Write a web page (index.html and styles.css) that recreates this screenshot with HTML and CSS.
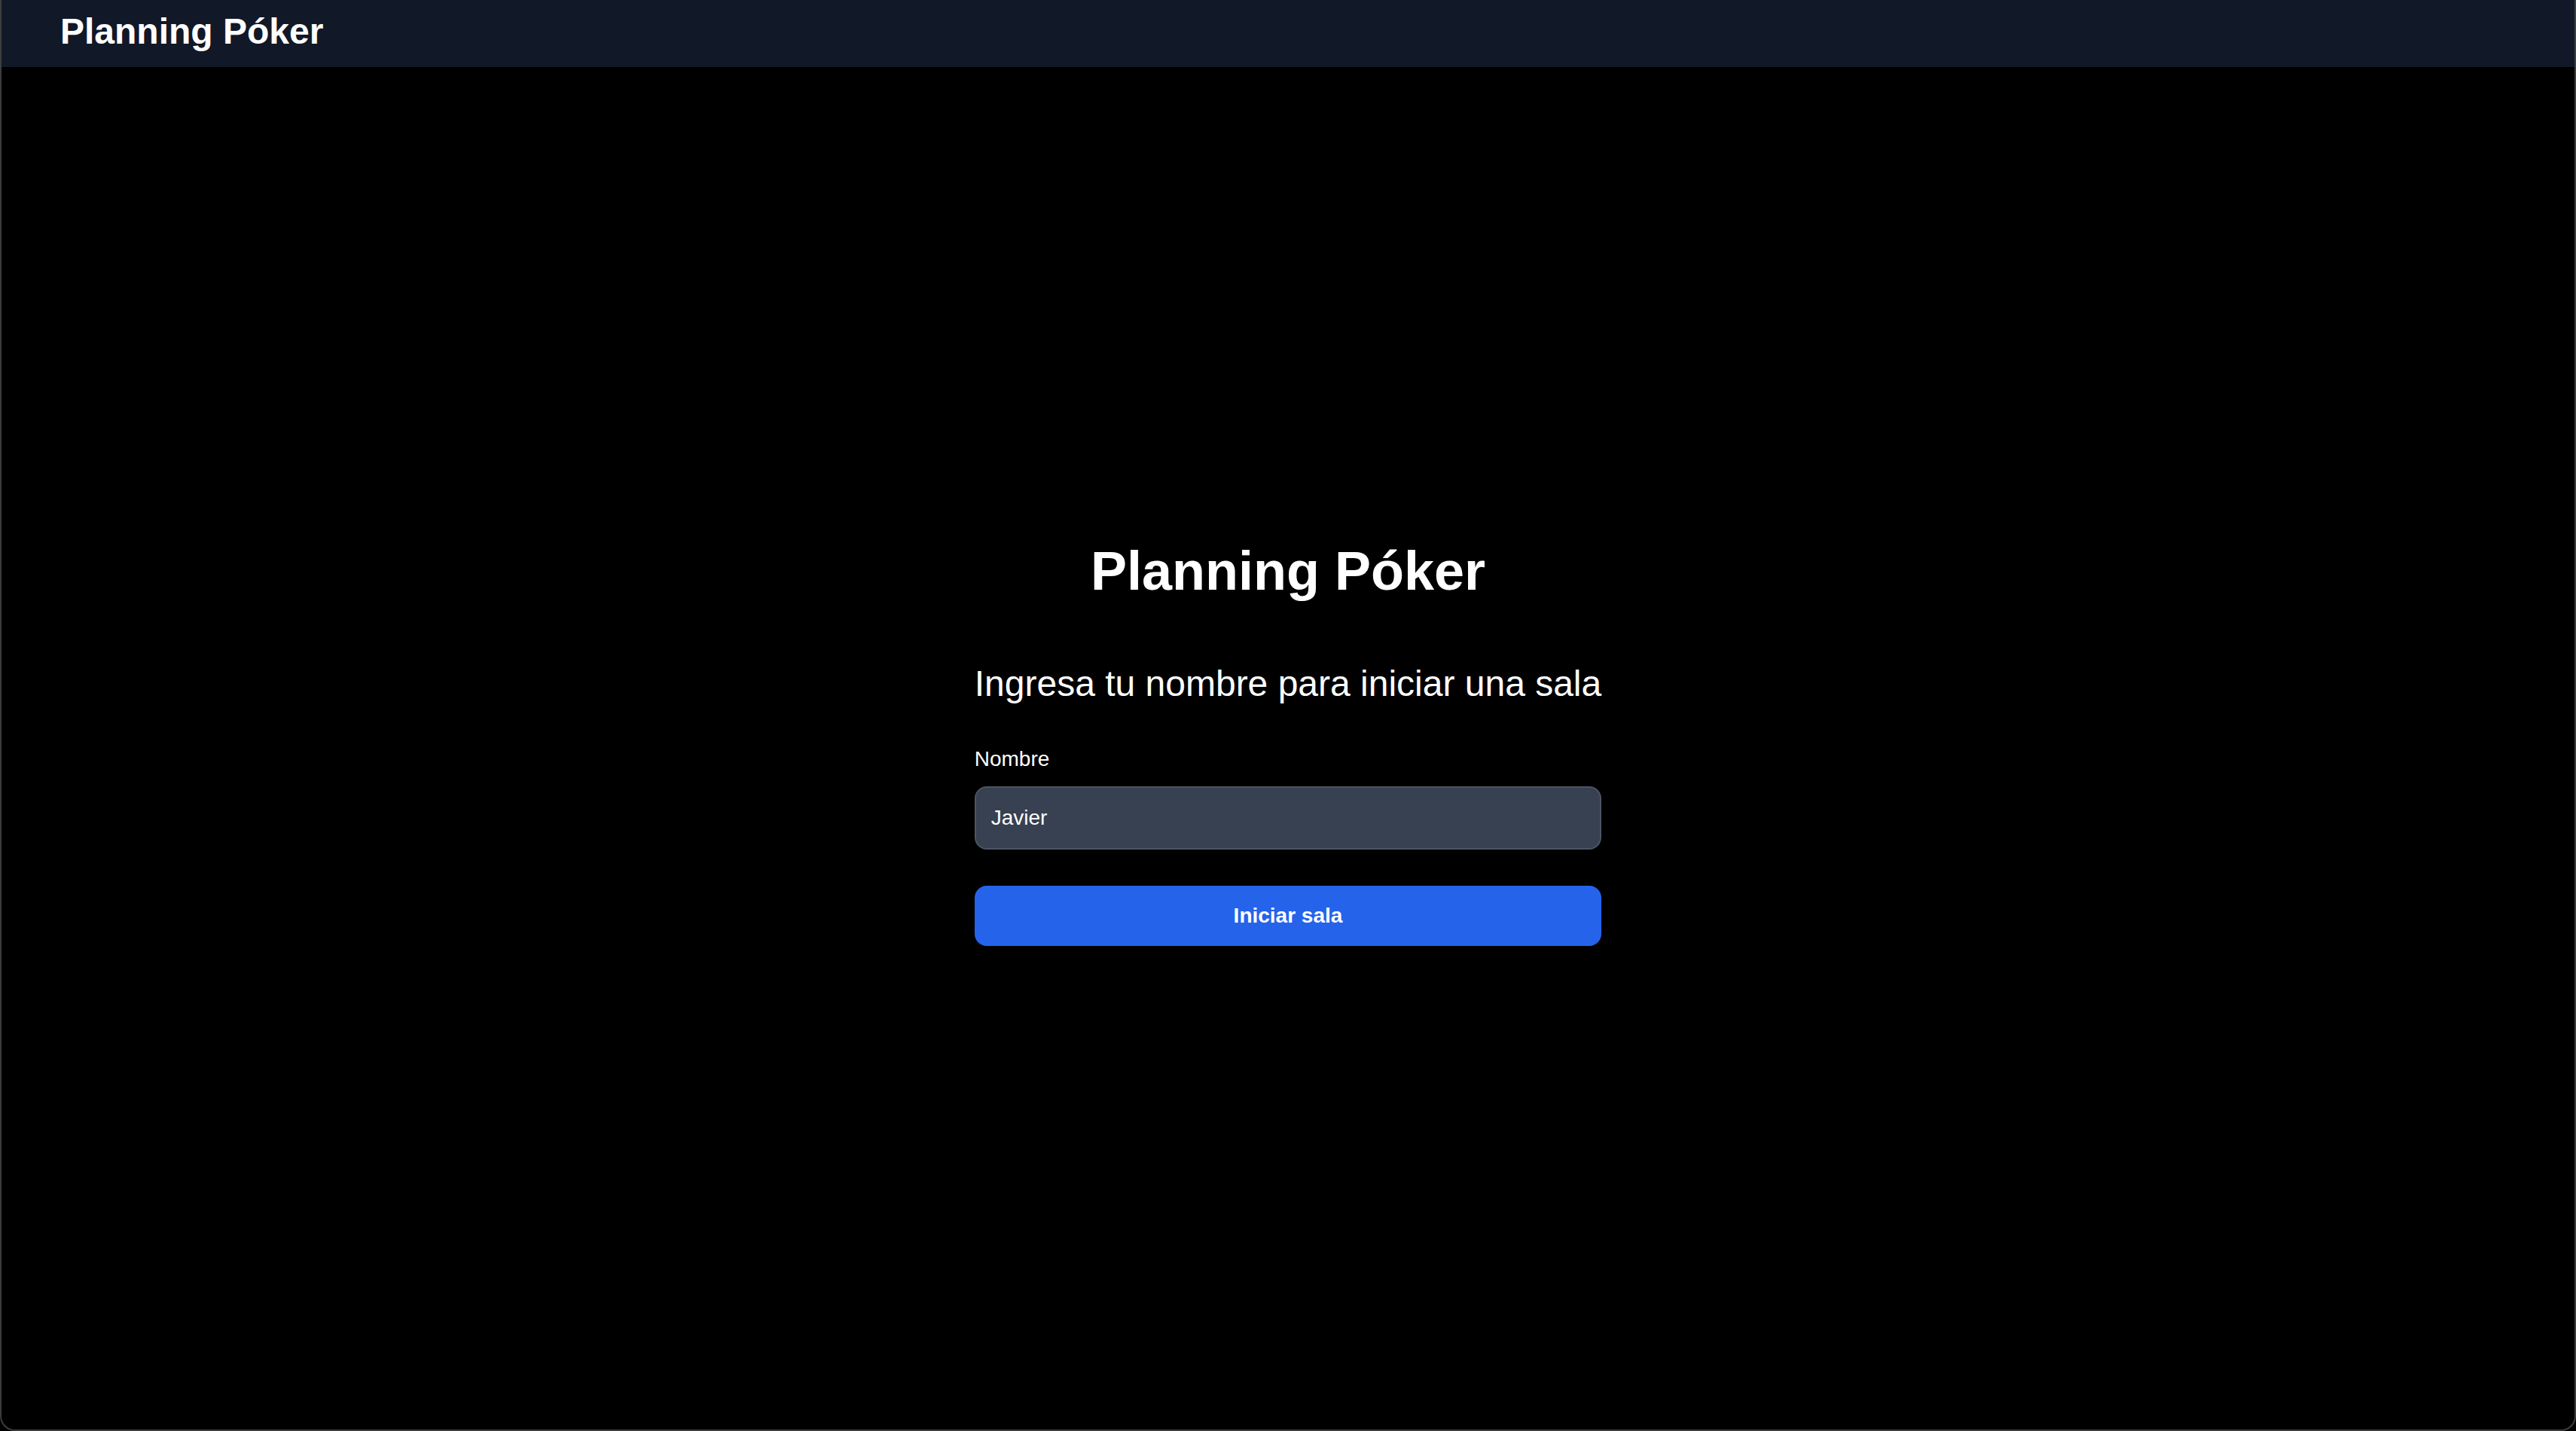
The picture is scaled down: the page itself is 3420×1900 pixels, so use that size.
FILE: index.html
```html
<!DOCTYPE html>
<html lang="es">
<head>
<meta charset="utf-8">
<title>Planning Póker</title>
<link rel="stylesheet" href="styles.css">
</head>
<body>
<div class="window">
  <header class="topbar">
    <span class="brand">Planning Póker</span>
  </header>
  <main class="main">
    <section class="card">
      <h1 class="title">Planning Póker</h1>
      <p class="subtitle">Ingresa tu nombre para iniciar una sala</p>
      <form class="form" onsubmit="return false;">
        <label class="label" for="nombre">Nombre</label>
        <input class="input" id="nombre" type="text" value="Javier">
        <button class="button" type="submit">Iniciar sala</button>
      </form>
    </section>
  </main>
</div>
</body>
</html>
```

FILE: styles.css
```css
* {
  box-sizing: border-box;
}

html, body {
  margin: 0;
  padding: 0;
  background: #000000;
  font-family: "Liberation Sans", Arial, Helvetica, sans-serif;
  color: #ffffff;
}

.window {
  height: 1900px;
  display: flex;
  flex-direction: column;
  border: 2px solid rgba(255, 255, 255, 0.24);
  border-top: none;
  border-radius: 0 0 20px 20px;
  overflow: hidden;
  background: #000000;
}

.topbar {
  height: 89px;
  flex: none;
  background: #111827;
  padding: 10px 78px;
  display: flex;
  align-items: flex-start;
}

.brand {
  font-size: 48px;
  line-height: 64px;
  font-weight: 700;
  color: #ffffff;
}

.main {
  flex: 1;
  display: flex;
  align-items: center;
  justify-content: center;
  padding-bottom: 14px;
}

.card {
  display: flex;
  flex-direction: column;
  align-items: stretch;
}

.title {
  margin: 0 0 78px;
  font-size: 72px;
  line-height: 80px;
  font-weight: 700;
  text-align: center;
}

.subtitle {
  margin: 0 0 48px;
  font-size: 48px;
  line-height: 64px;
  font-weight: 400;
  white-space: nowrap;
}

.form {
  display: flex;
  flex-direction: column;
}

.label {
  font-size: 28px;
  line-height: 40px;
  margin-bottom: 16px;
  color: #ffffff;
}

.input {
  height: 84px;
  padding: 20px;
  border: 2px solid #4b5563;
  border-radius: 16px;
  background: #374151;
  color: #ffffff;
  font-family: "Liberation Sans", Arial, Helvetica, sans-serif;
  font-size: 28px;
  line-height: 40px;
  outline: none;
}

.button {
  margin-top: 48px;
  height: 80px;
  padding: 20px;
  border: none;
  border-radius: 16px;
  background: #2563eb;
  color: #ffffff;
  font-family: "Liberation Sans", Arial, Helvetica, sans-serif;
  font-size: 28px;
  line-height: 40px;
  font-weight: 700;
  cursor: pointer;
}
```
